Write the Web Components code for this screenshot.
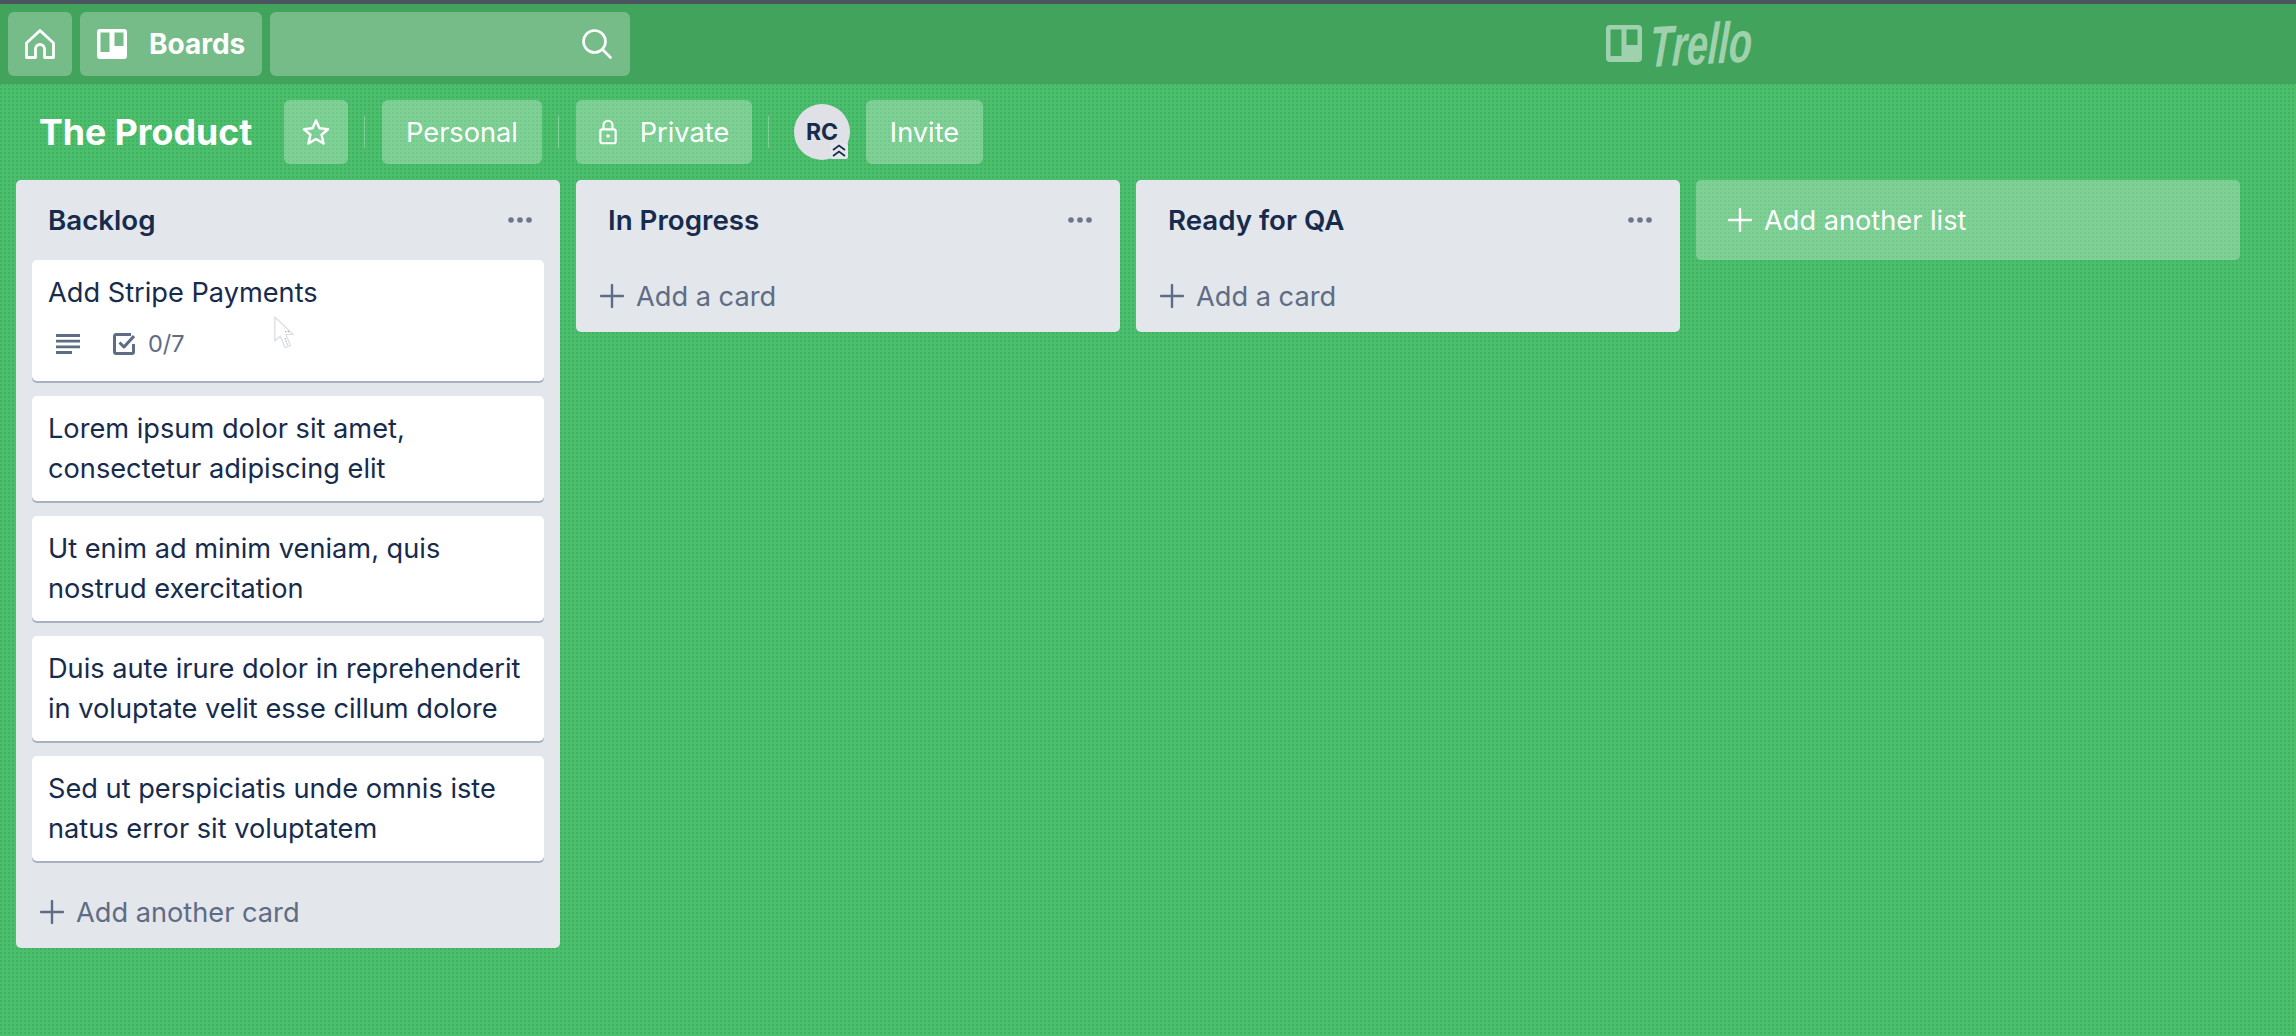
<!DOCTYPE html>
<html>
<head>
<meta charset="utf-8">
<title>The Product</title>
<style>
  html, body { margin: 0; height: 100%; }
  body {
    font-family: Inter, "Noto Sans", sans-serif;
    font-size: 27.2px;
    color: #172b4d;
    overflow: hidden;
  }
</style>
</head>
<body>
<trello-page>
  <top-bar></top-bar>
  <board-bar title="The Product"></board-bar>
  <board-canvas>
    <board-list name="Backlog" add="Add another card">
      <board-card>
        Add Stripe Payments
        <card-badges slot="badges" count="0/7"></card-badges>
        <mouse-cursor slot="overlay"></mouse-cursor>
      </board-card>
      <board-card>Lorem ipsum dolor sit amet, consectetur adipiscing elit</board-card>
      <board-card>Ut enim ad minim veniam, quis nostrud exercitation</board-card>
      <board-card>Duis aute irure dolor in reprehenderit in voluptate velit esse cillum dolore</board-card>
      <board-card>Sed ut perspiciatis unde omnis iste natus error sit voluptatem</board-card>
    </board-list>
    <board-list name="In Progress" add="Add a card"></board-list>
    <board-list name="Ready for QA" add="Add a card"></board-list>
    <add-list></add-list>
  </board-canvas>
</trello-page>

<script>
// icons shared by the components
const ICONS = {
  home: `<svg width="30" height="30" viewBox="0 0 30 30" fill="none" stroke="currentColor" stroke-width="2.800" stroke-linejoin="round"><path d="M15 1.500 1.500 14V28.500H10.500V20a4.500 4.500 0 0 1 9 0v8.500h9V14Z"/></svg>`,
  boards: `<svg width="30" height="30" viewBox="0 0 30 30"><path fill="currentColor" fill-rule="evenodd" d="M3 0h24a3 3 0 0 1 3 3v24a3 3 0 0 1-3 3H3a3 3 0 0 1-3-3V3a3 3 0 0 1 3-3ZM3.500 3.500V23h9V3.500ZM17.500 3.500V17h9V3.500Z"/></svg>`,
  search: `<svg width="30" height="30" viewBox="0 0 30 30" fill="none" stroke="currentColor" stroke-width="2.600" stroke-linecap="round"><circle cx="12.500" cy="12.500" r="11"/><path d="M20.500 20.500 28.500 28.500"/></svg>`,
  star: `<svg width="28" height="26" viewBox="0 0 28 26" fill="none" stroke="currentColor" stroke-width="2.500" stroke-linejoin="round"><path d="M14 1.500 17.500 9.300 26 10.200 19.600 15.800 21.500 24.500 14 20 6.500 24.500 8.400 15.800 2 10.200 10.500 9.300Z"/></svg>`,
  lock: `<svg width="18" height="28" viewBox="0 0 20 28" fill="none" stroke="currentColor" stroke-width="2.400"><rect x="1.500" y="11" width="17" height="15.500" rx="2"/><path d="M5 11V6.500a5 5 0 0 1 10 0V11"/><circle cx="10" cy="18.500" r="2" fill="currentColor" stroke="none"/></svg>`,
  plus: `<svg width="24" height="24" viewBox="0 0 24 24" stroke="currentColor" stroke-width="2.400" stroke-linecap="round"><path d="M12 1v22M1 12h22"/></svg>`,
  lines: `<svg width="24" height="20" viewBox="0 0 24 20" stroke="currentColor" stroke-width="2.800"><path d="M0 1.500h24M0 7.200h24M0 12.800h24M0 18.500h16"/></svg>`,
  check: `<svg width="22" height="22" viewBox="0 0 22 22" fill="none" stroke="currentColor" stroke-width="3" stroke-linejoin="round"><path d="M20.500 11v8a1.500 1.500 0 0 1-1.500 1.500H3A1.500 1.500 0 0 1 1.500 19V3A1.500 1.500 0 0 1 3 1.500H18"/><path d="M6.500 9.500 11 14 21 3"/></svg>`,
  dots: `<svg width="24" height="6" viewBox="0 0 24 6" fill="currentColor"><circle cx="3" cy="3" r="2.800"/><circle cx="12" cy="3" r="2.800"/><circle cx="21" cy="3" r="2.800"/></svg>`
};

const DOTS = "radial-gradient(circle at 1px 1px, rgba(30,110,60,.18) .8px, transparent 1.2px)";

class TrelloPage extends HTMLElement {
  constructor() {
    super();
    this.attachShadow({ mode: "open" });
    this.shadowRoot.innerHTML = `
      <style>
        :host {
          display: flex;
          flex-direction: column;
          height: 100vh;
          background-color: #4bbf6b;
          background-image: ${DOTS};
          background-size: 4px 4px;
        }
      </style>
      <slot></slot>
    `;
  }
}

class TopBar extends HTMLElement {
  constructor() {
    super();
    this.attachShadow({ mode: "open" });
    this.shadowRoot.innerHTML = `
      <style>
        :host {
          display: flex;
          align-items: center;
          position: relative;
          box-sizing: border-box;
          height: 84px;
          padding: 8px;
          gap: 8px;
          background: #41a35c;
          border-top: 4px solid #4a5560;
          color: #fff;
        }
        .btn {
          display: flex;
          align-items: center;
          flex: none;
          box-sizing: border-box;
          height: 64px;
          border-radius: 6px;
          background: rgba(255, 255, 255, .28);
        }
        svg { flex: none; }
        .home { width: 64px; justify-content: center; }
        .boards { width: 182px; padding-left: 17px; gap: 22px; font-weight: 700; font-size: 28px; }
        .search { width: 360px; justify-content: flex-end; padding-right: 18px; }
        .logo {
          display: flex;
          align-items: center;
          gap: 8px;
          position: absolute;
          left: 1606px;
          top: 21px;
          color: rgba(255, 255, 255, .5);
        }
        .word {
          display: inline-block;
          font-family: "Liberation Sans", sans-serif;
          font-style: italic;
          font-weight: 700;
          font-size: 58px;
          line-height: 37px;
          transform: translateY(3px) scaleX(.65) skewX(-6deg) rotate(-2deg);
          transform-origin: left center;
        }
      </style>
      <div class="btn home">${ICONS.home}</div>
      <div class="btn boards">${ICONS.boards}<span>Boards</span></div>
      <div class="btn search">${ICONS.search}</div>
      <div class="logo">
        <svg width="36" height="37" viewBox="0 0 36 37"><path fill="currentColor" fill-rule="evenodd" d="M4 0h28a4 4 0 0 1 4 4v29a4 4 0 0 1-4 4H4a4 4 0 0 1-4-4V4a4 4 0 0 1 4-4ZM4.500 4.500V31h11V4.500ZM20.500 4.500V20h11V4.500Z"/></svg>
        <span class="word">Trello</span>
      </div>
    `;
  }
}

class BoardBar extends HTMLElement {
  constructor() {
    super();
    this.attachShadow({ mode: "open" });
    this.shadowRoot.innerHTML = `
      <style>
        :host {
          display: flex;
          align-items: center;
          box-sizing: border-box;
          height: 96px;
          padding: 0 0 0 39px;
          color: #fff;
        }
        h1 {
          box-sizing: border-box;
          width: 245px;
          margin: 0;
          font-size: 35.700px;
          line-height: 64px;
          font-weight: 700;
          white-space: nowrap;
        }
        .btn {
          display: flex;
          align-items: center;
          justify-content: center;
          box-sizing: border-box;
          height: 64px;
          border-radius: 6px;
          background: rgba(255, 255, 255, .28);
        }
        .star { width: 64px; }
        .personal { width: 160px; }
        .private { width: 176px; gap: 23px; }
        .invite { width: 117px; margin-left: 16px; }
        .sep {
          width: 1px;
          height: 32px;
          margin: 0 17px 0 16px;
          background: rgba(255, 255, 255, .3);
        }
        .avatar {
          position: relative;
          display: flex;
          align-items: center;
          justify-content: center;
          width: 56px;
          height: 56px;
          border-radius: 50%;
          margin-left: 8px;
          background: #dfe1e6;
          color: #172b4d;
          font-size: 23px;
          font-weight: 700;
        }
        .badge {
          position: absolute;
          right: 2px;
          bottom: 1px;
          display: flex;
          width: 18px;
          height: 16px;
          border-radius: 2px;
          background: #e4e6ec;
        }
      </style>
      <h1>${this.getAttribute("title")}</h1>
      <div class="btn star">${ICONS.star}</div>
      <span class="sep"></span>
      <div class="btn personal">Personal</div>
      <span class="sep"></span>
      <div class="btn private">${ICONS.lock}<span>Private</span></div>
      <span class="sep"></span>
      <div class="avatar">RC
        <span class="badge">
          <svg width="18" height="16" viewBox="0 0 18 16" fill="none" stroke="#172b4d" stroke-width="1.800"><path d="M3 7 9 2.500 15 7M3 13 9 8.500 15 13"/></svg>
        </span>
      </div>
      <div class="btn invite">Invite</div>
    `;
  }
}

class BoardCanvas extends HTMLElement {
  constructor() {
    super();
    this.attachShadow({ mode: "open" });
    this.shadowRoot.innerHTML = `
      <style>
        :host {
          display: flex;
          align-items: flex-start;
          gap: 16px;
          padding: 0 16px;
        }
      </style>
      <slot></slot>
    `;
  }
}

class BoardList extends HTMLElement {
  constructor() {
    super();
    this.attachShadow({ mode: "open" });
    this.shadowRoot.innerHTML = `
      <style>
        :host {
          display: block;
          flex: none;
          width: 544px;
          box-sizing: border-box;
          border-radius: 5px;
          background: #e3e6eb;
          padding: 0 16px;
        }
        .head {
          display: flex;
          align-items: center;
          justify-content: space-between;
          height: 80px;
          padding: 0 12px 0 16px;
          font-weight: 600;
          font-size: 27.700px;
        }
        .head svg { color: #6b778c; display: block; }
        .cards { display: flex; flex-direction: column; gap: 15px; }
        .add {
          display: flex;
          align-items: center;
          gap: 12px;
          height: 72px;
          padding-left: 8px;
          color: #5e6c84;
        }
        .add.spaced { margin-top: 15px; }
      </style>
      <div class="head"><span>${this.getAttribute("name")}</span>${ICONS.dots}</div>
      <div class="cards"><slot></slot></div>
      <div class="add">${ICONS.plus}<span>${this.getAttribute("add")}</span></div>
    `;
  }

  connectedCallback() {
    // list with cards keeps a gap above the add row
    if (this.children.length) {
      this.shadowRoot.querySelector(".add").classList.add("spaced");
    }
  }
}

class BoardCard extends HTMLElement {
  constructor() {
    super();
    this.attachShadow({ mode: "open" });
    this.shadowRoot.innerHTML = `
      <style>
        :host {
          display: block;
          position: relative;
          box-sizing: border-box;
          padding: 13px 16px 12px;
          border-radius: 5px;
          background: #fff;
          box-shadow: 0 2px 0 #a9b0c4;
          line-height: 40px;
        }
      </style>
      <slot></slot>
      <slot name="badges"></slot>
      <slot name="overlay"></slot>
    `;
  }
}

class CardBadges extends HTMLElement {
  constructor() {
    super();
    this.attachShadow({ mode: "open" });
    this.shadowRoot.innerHTML = `
      <style>
        :host {
          display: flex;
          align-items: center;
          height: 40px;
          margin: 11px 0 5px 8px;
          color: #5e6c84;
          font-size: 23.500px;
        }
        svg { display: block; }
        .check { margin: 0 13px 0 33px; }
      </style>
      ${ICONS.lines}
      <span class="check">${ICONS.check}</span>
      <span>${this.getAttribute("count")}</span>
    `;
  }
}

class MouseCursor extends HTMLElement {
  constructor() {
    super();
    this.attachShadow({ mode: "open" });
    this.shadowRoot.innerHTML = `
      <style>
        :host { position: absolute; left: 240px; top: 55px; display: block; line-height: 0; }
      </style>
      <svg width="24" height="37" viewBox="0 0 26 38">
        <path d="M3 1V27L9 22 14 34 20 32 15 20H23Z" fill="#fff" stroke="#dcdfe4" stroke-width="1.500" stroke-linejoin="round"/>
        <path d="M14 17h6M14 24l3 8" fill="none" stroke="#8a8f99" stroke-width="1" stroke-dasharray="1.500 1.500"/>
      </svg>
    `;
  }
}

class AddList extends HTMLElement {
  constructor() {
    super();
    this.attachShadow({ mode: "open" });
    this.shadowRoot.innerHTML = `
      <style>
        :host {
          display: flex;
          align-items: center;
          gap: 12px;
          flex: none;
          box-sizing: border-box;
          width: 544px;
          height: 80px;
          padding-left: 32px;
          border-radius: 5px;
          background: rgba(255, 255, 255, .28);
          color: #fff;
        }
      </style>
      ${ICONS.plus}<span>Add another list</span>
    `;
  }
}

customElements.define("trello-page", TrelloPage);
customElements.define("top-bar", TopBar);
customElements.define("board-bar", BoardBar);
customElements.define("board-canvas", BoardCanvas);
customElements.define("board-list", BoardList);
customElements.define("board-card", BoardCard);
customElements.define("card-badges", CardBadges);
customElements.define("mouse-cursor", MouseCursor);
customElements.define("add-list", AddList);
</script>
</body>
</html>
